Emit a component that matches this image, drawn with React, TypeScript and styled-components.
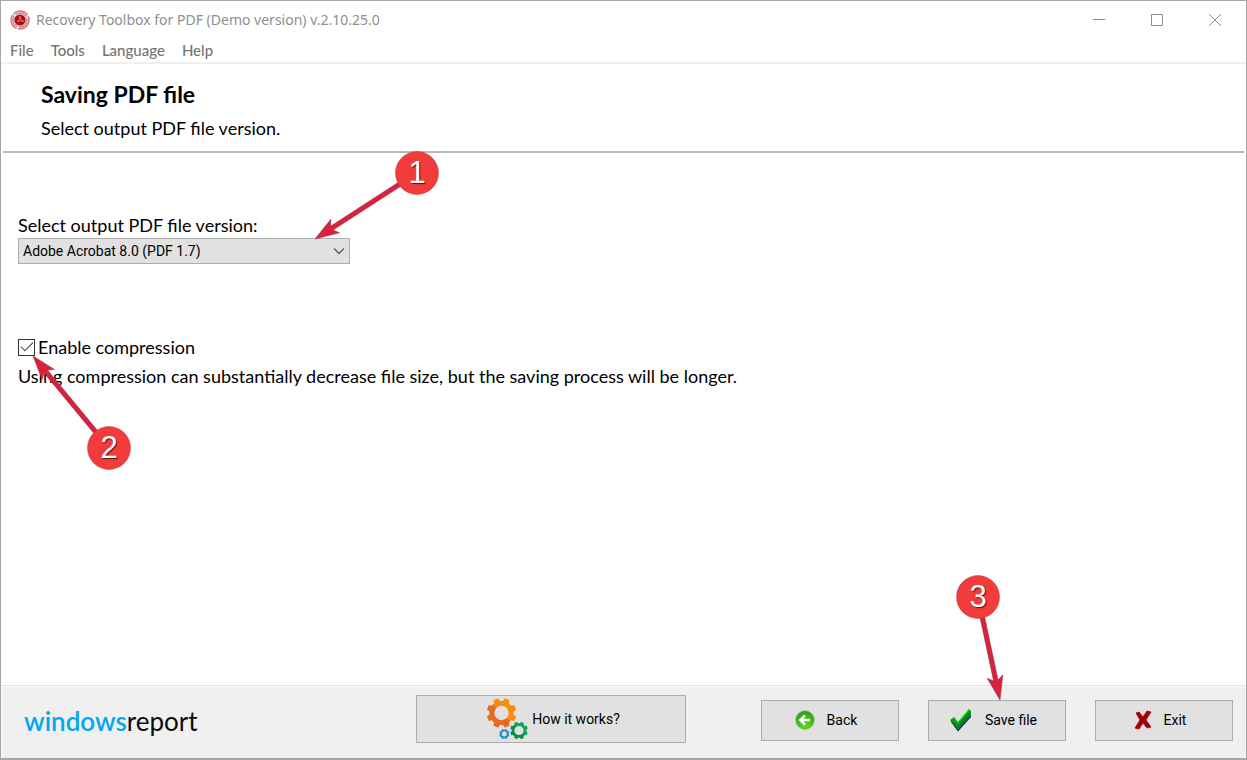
import React from 'react';
import styled, { createGlobalStyle } from 'styled-components';

const GlobalStyle = createGlobalStyle`
  * { box-sizing: border-box; }
  html, body, #root { height: 100%; }
  body { margin: 0; background: #fff; color: #000; font-family: Lato, "Open Sans", sans-serif; }
  button, select, input { font: inherit; color: inherit; margin: 0; }
  h1, p { margin: 0; }
`;

const Desktop = styled.div`
  min-height: 100%;
  display: flex;
  flex-direction: column;
`;

const Window = styled.div`
  flex: 1;
  display: flex;
  flex-direction: column;
  border: 1px solid #a6a6a6;
  border-bottom-width: 2px;
`;

const TitleBar = styled.header`
  height: 37px;
  display: flex;
  align-items: center;
  gap: 6px;
  padding: 0 7px 0 9px;
  font: 14px "Noto Sans", "Open Sans", sans-serif;
  color: #8f8f8f;
`;

const WindowTitle = styled.span`
  flex: 1;
`;

const WindowControls = styled.div`
  display: flex;
  gap: 10px;
`;

const ControlButton = styled.button`
  width: 48px;
  height: 30px;
  padding: 0;
  border: 0;
  background: none;
  display: grid;
  place-items: center;
  color: #8c8c8c;
`;

const MenuBar = styled.nav`
  height: 26px;
  display: flex;
  align-items: center;
  gap: 17px;
  padding: 0 9px;
  border-bottom: 2px solid #f0f0f0;
`;

const MenuItem = styled.button`
  padding: 0;
  border: 0;
  background: none;
  font-size: 15px;
  font-weight: 500;
  color: #757575;
`;

const PageHeader = styled.div`
  margin: 0 2px;
  padding: 16px 38px 12px;
  border-bottom: 2px solid #b9b9b9;
`;

const PageTitle = styled.h1`
  font-size: 23px;
  line-height: 28px;
  font-weight: 700;
`;

const Text = styled.p`
  font-size: 18px;
  line-height: 22px;
`;

const Subtitle = styled(Text)`
  margin-top: 9px;
`;

const Content = styled.main`
  flex: 1;
  padding: 61px 17px 0;
  display: flex;
  flex-direction: column;
  align-items: flex-start;
`;

const FieldLabel = styled.label`
  font-size: 18px;
  line-height: 22px;
`;

const Anchor = styled.div`
  position: relative;
  display: flex;
`;

const SelectBox = styled.div`
  position: relative;
  margin-top: 2px;
  width: 332px;
`;

const Select = styled.select`
  appearance: none;
  display: block;
  width: 100%;
  height: 26px;
  padding: 0 28px 0 4px;
  border: 1px solid #adadad;
  border-radius: 0;
  background: #e1e1e1;
  font: 14px Roboto, sans-serif;
`;

const SelectArrow = styled.svg`
  position: absolute;
  right: 5px;
  top: 9px;
  pointer-events: none;
`;

const CheckRow = styled.div`
  position: relative;
  margin-top: 72px;
  display: flex;
  align-items: center;
  gap: 3px;
`;

const CheckBox = styled.input`
  appearance: none;
  width: 17px;
  height: 17px;
  border: 1px solid #333;
  background: #fff;
  display: grid;
  place-items: center;
  &:checked::before {
    content: "";
    width: 11px;
    height: 5px;
    border: solid #333;
    border-width: 0 0 1px 1px;
    transform: translateY(-2px) rotate(-45deg);
  }
`;

const Note = styled(Text)`
  margin-top: 7px;
`;

const Footer = styled.footer`
  height: 73px;
  padding: 0 13px 6px 23px;
  display: grid;
  grid-template-columns: 392px 270px 1fr;
  align-items: center;
  background: #f0f0f0;
  border-top: 1px solid #e2e2e2;
  box-shadow: inset 1px 1px #fafafa;
`;

const Brand = styled.span`
  padding-top: 4px;
  font-size: 26px;
  line-height: 32px;
  color: #0c0c0c;
`;

const BrandAccent = styled.span`
  font-weight: 600;
  color: #04a6f0;
`;

const Actions = styled.div`
  padding-top: 2px;
  display: flex;
  justify-content: flex-end;
  gap: 29px;
`;

const Button = styled.button<{ $large?: boolean }>`
  width: ${(p) => (p.$large ? 270 : 138)}px;
  height: ${(p) => (p.$large ? 48 : 41)}px;
  padding: ${(p) => (p.$large ? '0 0 0 4px' : '0 8px 0 0')};
  display: flex;
  align-items: center;
  justify-content: center;
  gap: ${(p) => (p.$large ? 4 : 12)}px;
  border: 1px solid #adadad;
  background: #e1e1e1;
  font: 14px Roboto, sans-serif;
`;

const Callout = styled.svg<{ $left: number; $top: number }>`
  position: absolute;
  left: ${(p) => p.$left}px;
  top: ${(p) => p.$top}px;
  overflow: visible;
  pointer-events: none;
  z-index: 2;
`;

const CalloutNumber = styled.text`
  font: 31px "Liberation Sans", sans-serif;
  fill: #fff;
  text-anchor: middle;
  text-shadow: 1px 1px 1px #5a1515;
`;

type CalloutProps = { label: string; dx: number; dy: number; left: number; top: number };

/* The origin is the arrow tip; dx/dy locate the numbered disc from there. */
function NumberedArrow({ label, dx, dy, left, top }: CalloutProps) {
  const angle = (Math.atan2(dy, dx) * 180) / Math.PI;
  const length = Math.hypot(dx, dy);
  return (
    <Callout $left={left} $top={top} width="1" height="1" aria-hidden="true">
      <g transform={`rotate(${angle})`}>
        <path d={`M0 0 L24 -8 L20 -2.300 H${length} V2.300 H20 L24 8 Z`} fill="#d8213f" stroke="#8e3345" strokeWidth="0.500" />
      </g>
      <circle cx={dx} cy={dy} r="21.500" fill="#f23b3b" stroke="#b73a3a" strokeWidth="0.500" />
      <CalloutNumber x={dx} y={dy + 10}>{label}</CalloutNumber>
    </Callout>
  );
}

function AppIcon() {
  return (
    <svg width="20" height="20" viewBox="0 0 20 20" aria-hidden="true">
      <circle cx="10" cy="10" r="9" fill="#f6dada" stroke="#cf7c7d" strokeWidth="1.500" strokeDasharray="16 1.500" />
      <circle cx="10" cy="10" r="7" fill="none" stroke="#d58889" strokeWidth="1.500" strokeDasharray="12 2" />
      <circle cx="10" cy="10" r="5.600" fill="#ac0f14" />
      <path d="M10 6.200c-.2 2.600-1.200 4.600-3.200 6.200M10 6.200c.2 2.800 1.300 4 3.600 5.200M7.600 11.400c2-.8 4-.8 6 0" fill="none" stroke="#dc8080" strokeWidth="1" />
    </svg>
  );
}

function gearPath(cx: number, cy: number, outer: number, root: number, hole: number, teeth: number) {
  const step = (Math.PI * 2) / teeth;
  const at = (r: number, a: number) => `${(cx + r * Math.cos(a)).toFixed(2)} ${(cy + r * Math.sin(a)).toFixed(2)}`;
  const points: string[] = [];
  for (let i = 0; i < teeth; i++) {
    const a = (i + 0.5) * step;
    points.push(at(root, a - step * 0.32), at(outer, a - step * 0.22), at(outer, a + step * 0.22), at(root, a + step * 0.32));
  }
  return `M${points.join('L')}Z M${cx + hole} ${cy}a${hole} ${hole} 0 1 0 ${-2 * hole} 0a${hole} ${hole} 0 1 0 ${2 * hole} 0Z`;
}

function GearsIcon() {
  return (
    <svg width="42" height="42" viewBox="0 0 42 42" aria-hidden="true">
      <defs>
        <linearGradient id="orange" x1="0" y1="1" x2="1" y2="0">
          <stop offset="0.49" stopColor="#e56a25" />
          <stop offset="0.51" stopColor="#ff8a05" />
        </linearGradient>
        <linearGradient id="green" x1="0" y1="1" x2="1" y2="0">
          <stop offset="0.49" stopColor="#128a48" />
          <stop offset="0.51" stopColor="#0ba653" />
        </linearGradient>
      </defs>
      <g fillRule="evenodd">
        <path d={gearPath(15.5, 15, 15, 12.2, 7.2, 8)} fill="url(#orange)" />
        <path d={gearPath(33, 32.5, 9, 7.4, 4.6, 8)} fill="url(#green)" />
        <path d={gearPath(18.3, 36, 5.2, 4.6, 2.4, 8)} fill="#2795c9" />
      </g>
    </svg>
  );
}

function BackIcon() {
  return (
    <svg width="20" height="20" viewBox="0 0 20 20" aria-hidden="true">
      <defs>
        <radialGradient id="ball" cx="0.5" cy="0.8" r="0.8">
          <stop offset="0" stopColor="#5fdc1c" />
          <stop offset="1" stopColor="#2a9a1c" />
        </radialGradient>
      </defs>
      <circle cx="10" cy="10" r="9.300" fill="url(#ball)" stroke="#7cb874" strokeWidth="0.800" />
      <path d="M15 10H6M10 5.300L5.300 10l4.700 4.700" fill="none" stroke="#fff" strokeWidth="2.400" />
    </svg>
  );
}

function SaveIcon() {
  return (
    <svg width="24" height="24" viewBox="0 0 24 24" aria-hidden="true">
      <path d="M2 14l4-3 3 4L20 3l2 2v4L9 23.500Z" fill="#14207c" />
      <path d="M1 12l4-3 4 5L20 1l2 2v4L9 21.500Z" fill="#08a512" />
      <path d="M2 14l7 6L21 6" fill="none" stroke="#045d0a" strokeWidth="1" />
      <path d="M2 12l7 5.500L21 3.500" fill="none" stroke="#067a0d" strokeWidth="1" />
      <path d="M5 9.500l4 5L20 1.500" fill="none" stroke="#27d62f" strokeWidth="1" />
    </svg>
  );
}

function ExitIcon() {
  return (
    <svg width="18" height="20" viewBox="0 0 18 20" aria-hidden="true">
      <path d="M2 3l3-1 4 5 4-6 4 1-5 8 5 7-4 1-4-5-4 6-4-1 5-8Z" fill="#930508" stroke="#c70d10" strokeWidth="1" />
    </svg>
  );
}

export default function App() {
  return (
    <Desktop>
      <GlobalStyle />
      <Window>
        <TitleBar>
          <AppIcon />
          <WindowTitle>Recovery Toolbox for PDF (Demo version) v.2.10.25.0</WindowTitle>
          <WindowControls>
            <ControlButton aria-label="Minimize">
              <svg width="12" height="12"><path d="M0 5.500h12" stroke="currentColor" /></svg>
            </ControlButton>
            <ControlButton aria-label="Maximize">
              <svg width="12" height="12"><path d="M.5.5h11v11H.5Z" fill="none" stroke="currentColor" /></svg>
            </ControlButton>
            <ControlButton aria-label="Close">
              <svg width="12" height="12"><path d="M0 0l12 12M12 0L0 12" stroke="currentColor" /></svg>
            </ControlButton>
          </WindowControls>
        </TitleBar>
        <MenuBar>
          {['File', 'Tools', 'Language', 'Help'].map((item) => (
            <MenuItem key={item}>{item}</MenuItem>
          ))}
        </MenuBar>
        <PageHeader>
          <PageTitle>Saving PDF file</PageTitle>
          <Subtitle>Select output PDF file version.</Subtitle>
        </PageHeader>
        <Content>
          <FieldLabel htmlFor="version">Select output PDF file version:</FieldLabel>
          <SelectBox>
            <Select id="version" defaultValue="1.7">
              <option value="1.7">Adobe Acrobat 8.0 (PDF 1.7)</option>
            </Select>
            <SelectArrow width="12" height="9" viewBox="0 0 12 9" aria-hidden="true">
              <path d="M1 1.500l5 5 5-5" fill="none" stroke="#5c5c5c" strokeWidth="1.300" />
            </SelectArrow>
            <NumberedArrow label="1" left={297} top={1} dx={102} dy={-66} />
          </SelectBox>
          <CheckRow>
            <CheckBox id="compression" type="checkbox" defaultChecked />
            <FieldLabel htmlFor="compression">Enable compression</FieldLabel>
            <NumberedArrow label="2" left={15} top={20} dx={76} dy={92} />
          </CheckRow>
          <Note>Using compression can substantially decrease file size, but the saving process will be longer.</Note>
        </Content>
        <Footer>
          <Brand><BrandAccent>windows</BrandAccent>report</Brand>
          <Button $large><GearsIcon />How it works?</Button>
          <Actions>
            <Button><BackIcon />Back</Button>
            <Anchor>
              <Button><SaveIcon />Save file</Button>
              <NumberedArrow label="3" left={72} top={0} dx={-22} dy={-103} />
            </Anchor>
            <Button><ExitIcon />Exit</Button>
          </Actions>
        </Footer>
      </Window>
    </Desktop>
  );
}
